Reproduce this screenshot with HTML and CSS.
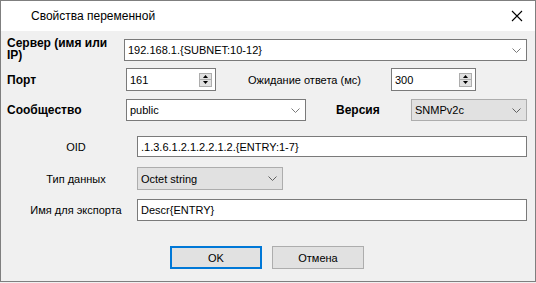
FILE: index.html
```html
<!DOCTYPE html>
<html>
<head>
<meta charset="utf-8">
<link rel="stylesheet" href="styles.css">
</head>
<body>
<div class="window">
  <div class="titlebar">
    <span class="title">Свойства переменной</span>
    <svg class="close" width="12" height="12" viewBox="0 0 12 12"><path d="M1 1 L11 11 M11 1 L1 11" stroke="#000" stroke-width="1.1" fill="none"/></svg>
  </div>
  <div class="content">
    <div class="row row-server">
      <label class="lbl-bold lbl-server">Сервер (имя или IP)</label>
      <div class="combo combo-white combo-server">
        <span class="val">192.168.1.{SUBNET:10-12}</span>
        <svg class="chev" width="9" height="5" viewBox="0 0 9 5"><polyline points="0.5,0.5 4.5,4.5 8.5,0.5" stroke="#7a7a7a" fill="none"/></svg>
      </div>
    </div>
    <div class="row row-port">
      <label class="lbl-bold lbl-port">Порт</label>
      <div class="spin spin-port">
        <span class="val">161</span>
        <div class="spinbtns">
          <div class="sb"><svg width="5" height="3" viewBox="0 0 5 3"><polygon points="2.5,0 5,3 0,3" fill="#000"/></svg></div>
          <div class="sb"><svg width="5" height="3" viewBox="0 0 5 3"><polygon points="0,0 5,0 2.5,3" fill="#000"/></svg></div>
        </div>
      </div>
      <label class="lbl lbl-wait">Ожидание ответа (мс)</label>
      <div class="spin spin-wait">
        <span class="val">300</span>
        <div class="spinbtns">
          <div class="sb"><svg width="5" height="3" viewBox="0 0 5 3"><polygon points="2.5,0 5,3 0,3" fill="#000"/></svg></div>
          <div class="sb"><svg width="5" height="3" viewBox="0 0 5 3"><polygon points="0,0 5,0 2.5,3" fill="#000"/></svg></div>
        </div>
      </div>
    </div>
    <div class="row row-comm">
      <label class="lbl-bold lbl-comm">Сообщество</label>
      <div class="combo combo-white combo-comm">
        <span class="val">public</span>
        <svg class="chev" width="9" height="5" viewBox="0 0 9 5"><polyline points="0.5,0.5 4.5,4.5 8.5,0.5" stroke="#7a7a7a" fill="none"/></svg>
      </div>
      <label class="lbl-bold lbl-ver">Версия</label>
      <div class="combo combo-gray combo-ver">
        <span class="val">SNMPv2c</span>
        <svg class="chev" width="9" height="5" viewBox="0 0 9 5"><polyline points="0.5,0.5 4.5,4.5 8.5,0.5" stroke="#606060" fill="none"/></svg>
      </div>
    </div>
    <div class="row row-oid">
      <label class="lbl lbl-center">OID</label>
      <div class="input input-wide"><span class="val">.1.3.6.1.2.1.2.2.1.2.{ENTRY:1-7}</span></div>
    </div>
    <div class="row row-type">
      <label class="lbl lbl-center">Тип данных</label>
      <div class="combo combo-gray combo-type">
        <span class="val">Octet string</span>
        <svg class="chev" width="9" height="5" viewBox="0 0 9 5"><polyline points="0.5,0.5 4.5,4.5 8.5,0.5" stroke="#606060" fill="none"/></svg>
      </div>
    </div>
    <div class="row row-export">
      <label class="lbl lbl-center">Имя для экспорта</label>
      <div class="input input-wide"><span class="val">Descr{ENTRY}</span></div>
    </div>
    <div class="buttons">
      <button class="btn btn-ok">OK</button>
      <button class="btn btn-cancel">Отмена</button>
    </div>
  </div>
</div>
</body>
</html>
```
FILE: styles.css
```css
* { box-sizing: border-box; }
html, body { margin: 0; padding: 0; }
body {
  width: 536px;
  height: 283px;
  background: #f0f0f0;
  font-family: "Liberation Sans", Arial, sans-serif;
  font-size: 11px;
  color: #000;
  overflow: hidden;
}
.window {
  width: 536px;
  height: 282px;
  border: 1px solid #7f7f7f;
  background: #f0f0f0;
  display: flex;
  flex-direction: column;
}
.titlebar {
  height: 30px;
  background: #fff;
  display: flex;
  align-items: center;
  padding-left: 30px;
  padding-right: 12px;
  flex-shrink: 0;
}
.title {
  font-family: "Liberation Sans", Arial, sans-serif;
  font-size: 12px;
  flex: 1;
  margin-top: -1px;
}
.close { display: block; }
.content {
  flex: 1;
  display: flex;
  flex-direction: column;
  padding: 0 8px 0 6px;
}
.row {
  display: flex;
  align-items: center;
}
.lbl-bold {
  font-weight: bold;
  font-size: 12px;
  line-height: 12px;
}
.lbl { font-size: 11px; }
.val { white-space: nowrap; }

.row-server { margin-top: 8px; height: 22px; }
.lbl-server { width: 117px; align-self: flex-start; margin-top: -2px; }
.combo-server { flex: 1; }

.row-port { margin-top: 7px; height: 23px; }
.lbl-port { width: 119px; }
.spin-port { width: 90px; }
.lbl-wait { margin-left: 32px; width: 143px; }
.spin-wait { width: 85px; }

.row-comm { margin-top: 8px; height: 22px; }
.lbl-comm { width: 119px; }
.combo-comm { width: 180px; }
.lbl-ver { margin-left: 30px; width: 75px; }
.combo-ver { width: 116px; }

.row-oid { margin-top: 15px; height: 21px; }
.row-type { margin-top: 10px; height: 23px; }
.row-export { margin-top: 9px; height: 22px; }

.lbl-center { width: 130px; text-align: center; padding-left: 8px; }
.input-wide { flex: 1; height: 100%; }
.combo-type { width: 146px; }

.combo, .spin, .input {
  height: 100%;
  display: flex;
  align-items: center;
  font-size: 11px;
  padding-left: 3px;
}
.combo-white, .spin, .input {
  background: #fff;
  border: 1px solid #7a7a7a;
}
.combo-gray {
  background: #e1e1e1;
  border: 1px solid #adadad;
}
.combo .val, .spin .val, .input .val { flex: 1; }
.chev { margin-right: 5px; display: block; }

.spinbtns {
  display: flex;
  flex-direction: column;
  margin-right: 3px;
  width: 13px;
  height: 14px;
  border: 1px solid #adadad;
  background: #e1e1e1;
}
.sb {
  flex: 1;
  display: flex;
  align-items: center;
  justify-content: center;
}
.sb + .sb { border-top: 1px solid #adadad; }
.sb svg { display: block; }

.buttons {
  display: flex;
  justify-content: center;
  gap: 10px;
  margin-top: 25px;
}
.btn {
  width: 92px;
  height: 23px;
  font-family: "Liberation Sans", Arial, sans-serif;
  font-size: 11px;
  background: #e1e1e1;
  border: 1px solid #adadad;
  padding: 0;
  color: #000;
}
.btn-ok { border: 2px solid #0078d7; }
```
